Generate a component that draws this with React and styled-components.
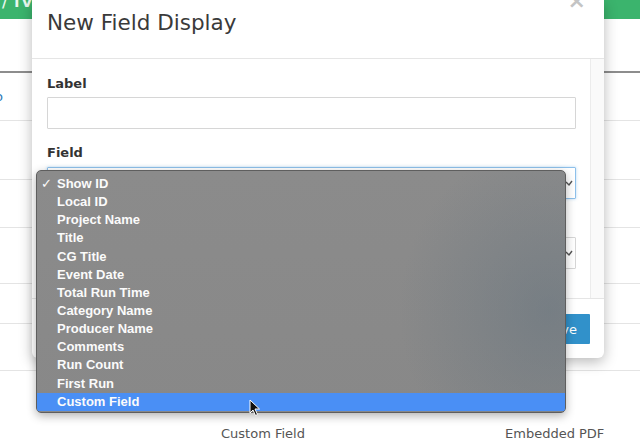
import React from "react";
import styled, { createGlobalStyle } from "styled-components";

const Global = createGlobalStyle`
  html, body { margin: 0; padding: 0; background: #fff; }
  body { width: 640px; height: 443px; overflow: hidden; font-family: "DejaVu Sans", Verdana, sans-serif; }
  #root { position: relative; width: 640px; height: 443px; overflow: hidden; }
`;

const Page = styled.div`
  display: flex;
  flex-direction: column;
  width: 640px;
  height: 443px;
`;

const TopBar = styled.div`
  height: 19px;
  background: #3bb46d;
  color: #e8f7ee;
  font-size: 14px;
  font-weight: bold;
  padding-left: 2px;
  line-height: 0;
  overflow: hidden;
`;

const TopBarText = styled.span`
  display: inline-block;
  line-height: 14px;
  margin-top: -5px;
`;

const HeaderArea = styled.div`
  height: 52px;
  border-bottom: 2px solid #8d8d8d;
`;

const Row = styled.div`
  height: ${(p) => p.$h}px;
  border-bottom: 1px solid #e4e4e4;
  display: grid;
  grid-template-columns: 221px 284px 1fr;
  align-items: end;
  font-size: 13px;
  color: #555;
  box-sizing: border-box;
`;

const RowLink = styled.span`
  color: #2a7ab8;
  margin-left: -5px;
  align-self: center;
`;

const Cell = styled.span`
  line-height: 16px;
`;

const LastRow = styled.div`
  flex: 1;
  display: grid;
  grid-template-columns: 221px 284px 1fr;
  align-content: end;
  padding-bottom: 1px;
  font-size: 13px;
  color: #555;
`;

const Modal = styled.div`
  position: absolute;
  left: 32px;
  top: 0;
  width: 572px;
  height: 358px;
  background: #fff;
  border-radius: 0 0 6px 6px;
  box-shadow: 0 4px 14px rgba(0, 0, 0, 0.28);
  display: flex;
  flex-direction: column;
`;

const ModalHeader = styled.div`
  position: relative;
  border-bottom: 1px solid #e5e5e5;
  padding: 8px 15px 0;
  height: 50px;
`;

const Title = styled.h4`
  margin: 0;
  font-size: 21.5px;
  font-weight: normal;
  color: #3a3a3a;
  line-height: 30px;
`;

const Close = styled.span`
  position: absolute;
  right: 18px;
  top: -9px;
  font-size: 22px;
  font-weight: bold;
  color: #c4c4c4;
  line-height: 20px;
`;

const ModalBody = styled.div`
  flex: 1;
  display: flex;
  border-bottom: 1px solid #e5e5e5;
`;

const Form = styled.div`
  flex: 1;
  padding: 17px 14px 0 15px;
  display: flex;
  flex-direction: column;
`;

const Scrollbar = styled.div`
  width: 13px;
  background: #fafafa;
  border-left: 1px solid #ececec;
`;

const Label = styled.label`
  font-size: 13px;
  font-weight: bold;
  color: #333;
  line-height: 16px;
  margin-bottom: ${(p) => p.$mb}px;
`;

const Input = styled.div`
  height: 32px;
  box-sizing: border-box;
  border: 1px solid #d6d6d6;
  border-radius: 1px;
  margin-bottom: ${(p) => p.$mb}px;
  position: relative;
  ${(p) =>
    p.$focus &&
    `border-color: #8ec0ea; box-shadow: 0 0 3px rgba(102,175,233,.5);`}
`;

const Chevron = styled.svg`
  position: absolute;
  right: 2px;
  top: 11px;
`;

const ModalFooter = styled.div`
  height: 59px;
  display: flex;
  justify-content: flex-end;
  align-items: center;
  padding-right: 14px;
`;

const SaveButton = styled.button`
  height: 30px;
  width: 60px;
  border: none;
  border-radius: 1px;
  background: #3191ca;
  color: #fff;
  font-family: "DejaVu Sans", Verdana, sans-serif;
  font-size: 13px;
  padding: 0 0 0 2px;
  margin-top: 1px;
`;

const Dropdown = styled.ul`
  position: absolute;
  left: 36px;
  top: 170px;
  width: 530px;
  height: 243px;
  box-sizing: border-box;
  margin: 0;
  padding: 4px 0 0;
  list-style: none;
  border: 1px solid #5e5e5e;
  border-radius: 5px;
  overflow: hidden;
  background:
    radial-gradient(ellipse 150px 170px at 97% 58%, rgba(95, 112, 125, 0.45), rgba(95, 112, 125, 0) 100%),
    linear-gradient(180deg, #8b8b8b 0%, #888 100%);
  box-shadow: 0 3px 10px rgba(0, 0, 0, 0.3);
`;

const Item = styled.li`
  position: relative;
  height: 18.15px;
  line-height: 18px;
  padding-left: 20px;
  font-family: "Liberation Sans", Helvetica, Arial, sans-serif;
  font-weight: bold;
  font-size: 13px;
  color: #fbfbfb;
  background: ${(p) => (p.$active ? "#4a8ff5" : "transparent")};
`;

const Check = styled.span`
  position: absolute;
  left: 4px;
  top: 0;
  font-weight: normal;
  font-family: "DejaVu Sans", sans-serif;
  font-size: 13px;
`;

const Cursor = styled.svg`
  position: absolute;
  left: 249px;
  top: 399px;
`;

const items = [
  "Show ID",
  "Local ID",
  "Project Name",
  "Title",
  "CG Title",
  "Event Date",
  "Total Run Time",
  "Category Name",
  "Producer Name",
  "Comments",
  "Run Count",
  "First Run",
  "Custom Field",
];

const rowHeights = [48, 59, 48, 56, 40, 47];

export default function App() {
  return (
    <>
      <Global />
      <Page>
        <TopBar>
          <TopBarText>/ TV</TopBarText>
        </TopBar>
        <HeaderArea />
        {rowHeights.map((h, i) => (
          <Row key={i} $h={h}>
            {i === 0 ? <RowLink>o</RowLink> : <Cell />}
          </Row>
        ))}
        <LastRow>
          <span />
          <Cell>Custom Field</Cell>
          <Cell>Embedded PDF</Cell>
        </LastRow>
      </Page>

      <Modal>
        <ModalHeader>
          <Title>New Field Display</Title>
          <Close>×</Close>
        </ModalHeader>
        <ModalBody>
          <Form>
            <Label $mb={5}>Label</Label>
            <Input $mb={16} />
            <Label $mb={6}>Field</Label>
            <Input $focus $mb={22}>
              <Chevron width="8" height="8" viewBox="0 0 8 8">
                <path d="M1 3 L4 6 L7 2" fill="none" stroke="#555" strokeWidth="1.4" />
              </Chevron>
            </Input>
            <Label $mb={0}>&nbsp;</Label>
            <Input $mb={0}>
              <Chevron width="8" height="8" viewBox="0 0 8 8">
                <path d="M1 3 L4 6 L7 2" fill="none" stroke="#555" strokeWidth="1.4" />
              </Chevron>
            </Input>
          </Form>
          <Scrollbar />
        </ModalBody>
        <ModalFooter>
          <SaveButton>Save</SaveButton>
        </ModalFooter>
      </Modal>

      <Dropdown>
        {items.map((t, i) => (
          <Item key={t} $active={i === items.length - 1}>
            {i === 0 && <Check>✓</Check>}
            {t}
          </Item>
        ))}
      </Dropdown>

      <Cursor width="12" height="18" viewBox="0 0 12 18">
        <path d="M1 1 L1 14 L4 11 L6.5 16.5 L8.5 15.5 L6 10 L10.5 10 Z" fill="#111" stroke="#fff" strokeWidth="1" />
      </Cursor>
    </>
  );
}
